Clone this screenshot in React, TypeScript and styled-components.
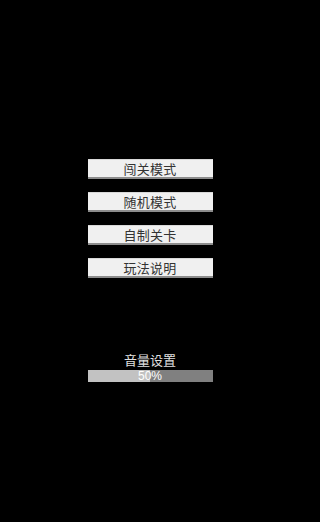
import React from "react";
import styled, { createGlobalStyle } from "styled-components";

const Global = createGlobalStyle`
  html, body { margin: 0; padding: 0; background: #000; }
  body { width: 300px; height: 522px; overflow: hidden; }
`;

const Screen = styled.div`
  width: 300px;
  height: 522px;
  background: #000;
  display: flex;
  flex-direction: column;
  align-items: center;
  padding-top: 159px;
  box-sizing: border-box;
  font-family: "Noto Sans CJK SC", "Noto Sans", sans-serif;
`;

const Menu = styled.div`
  display: flex;
  flex-direction: column;
  gap: 13px;
`;

const MenuButton = styled.button`
  width: 125px;
  height: 20px;
  margin: 0;
  padding: 0;
  border: none;
  border-top: 1px solid #d8d8d8;
  border-bottom: 2px solid #8c8c8c;
  background: #f0f0f0;
  color: #333;
  font-family: inherit;
  font-size: 13px;
  line-height: 17px;
  letter-spacing: 0.3px;
  display: flex;
  align-items: center;
  justify-content: center;
  box-sizing: border-box;
`;

const Volume = styled.div`
  margin-top: 74px;
  display: flex;
  flex-direction: column;
  align-items: center;
  gap: 2px;
`;

const VolumeLabel = styled.div`
  color: #e0e0e0;
  font-size: 13px;
  line-height: 16px;
`;

const Bar = styled.div`
  position: relative;
  width: 125px;
  height: 12px;
  background: #808080;
`;

const Fill = styled.div`
  height: 100%;
  background: #c2c2c2;
`;

const BarText = styled.div`
  position: absolute;
  inset: 0;
  display: flex;
  align-items: center;
  justify-content: center;
  color: #fff;
  font-family: "Liberation Sans", Arial, sans-serif;
  font-size: 12px;
  line-height: 12px;
`;

const items = ["闯关模式", "随机模式", "自制关卡", "玩法说明"];

export default function App() {
  const volume = 50;
  return (
    <>
      <Global />
      <Screen>
        <Menu>
          {items.map((t) => (
            <MenuButton key={t}>{t}</MenuButton>
          ))}
        </Menu>
        <Volume>
          <VolumeLabel>音量设置</VolumeLabel>
          <Bar>
            <Fill style={{ width: `${volume}%` }} />
            <BarText>{volume}%</BarText>
          </Bar>
        </Volume>
      </Screen>
    </>
  );
}
